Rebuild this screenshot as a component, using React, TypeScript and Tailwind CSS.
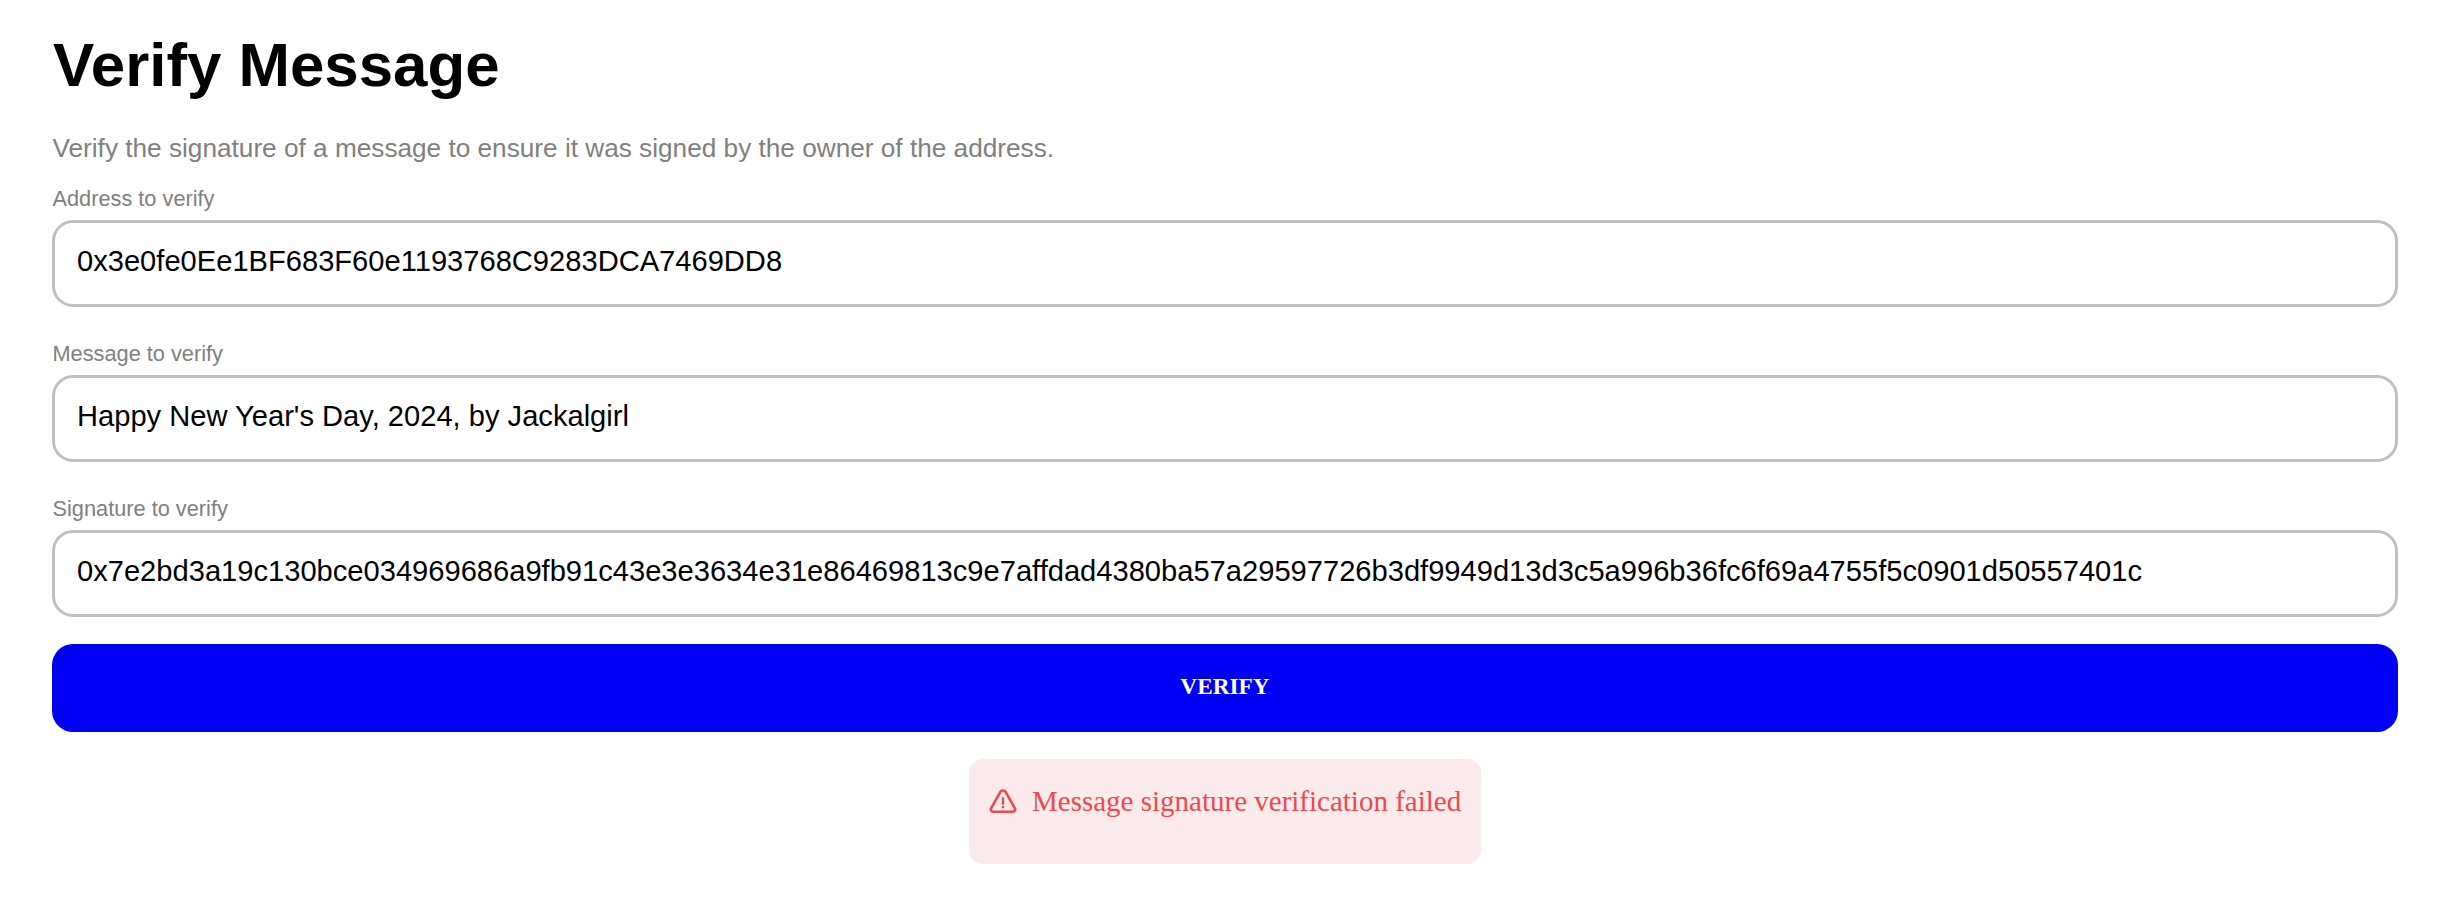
const fields = [
  { id: "address", label: "Address to verify", value: "0x3e0fe0Ee1BF683F60e1193768C9283DCA7469DD8" },
  { id: "message", label: "Message to verify", value: "Happy New Year's Day, 2024, by Jackalgirl" },
  {
    id: "signature",
    label: "Signature to verify",
    value:
      "0x7e2bd3a19c130bce034969686a9fb91c43e3e3634e31e86469813c9e7affdad4380ba57a29597726b3df9949d13d3c5a996b36fc6f69a4755f5c0901d50557401c",
  },
];

function Field({ id, label, value }: { id: string; label: string; value: string }) {
  return (
    <div className="flex flex-col">
      <label htmlFor={id} className="mb-[6px] pl-[0.5px] text-[21.75px] leading-[30px] text-[#808080]">
        {label}
      </label>
      <input
        id={id}
        defaultValue={value}
        className="h-[87px] w-full rounded-[21px] border-3 border-[#c0c0c0] bg-white px-[22px] pb-[5px] text-[29.12px] text-black outline-none"
      />
    </div>
  );
}

function WarningIcon() {
  return (
    <svg width="28" height="25" viewBox="0 0 28 25" fill="none" stroke="currentColor" strokeLinejoin="round" className="mt-[8px] shrink-0">
      <path
        strokeWidth="2.6"
        d="M11.2 3.2 L2.1 19.4 a2.3 2.3 0 0 0 2 3.4 H23.9 a2.3 2.3 0 0 0 2 -3.4 L16.8 3.2 a3.2 3.2 0 0 0 -5.6 0z"
      />
      <path strokeWidth="2.3" d="M14 8.2 V15.8 M14 17 V19.3" />
    </svg>
  );
}

export default function App() {
  return (
    <main className="flex min-h-[910px] flex-col bg-white pt-[28px] pr-[56px] pl-[52px] font-['Liberation_Sans',Arial,sans-serif]">
      <h1 className="pl-px text-[61.8px] leading-[74px] font-bold text-black">Verify Message</h1>
      <p className="mt-[26px] pl-[0.5px] text-[26.2px] leading-[40px] text-[#808080]">
        Verify the signature of a message to ensure it was signed by the owner of the address.
      </p>
      <form className="mt-[16px] flex flex-col" onSubmit={(e) => e.preventDefault()}>
        <div className="flex flex-col gap-[32px]">
          {fields.map((f) => (
            <Field key={f.id} {...f} />
          ))}
        </div>
        <button
          type="submit"
          className="mt-[27px] h-[88px] rounded-[21px] bg-[#0000f5] pb-[3px] font-['Liberation_Serif','Times_New_Roman',serif] text-[23.3px] font-bold text-white"
        >
          VERIFY
        </button>
      </form>
      <div
        role="alert"
        className="mt-[27px] flex h-[105px] w-[512px] items-start gap-[15px] self-center rounded-[14px] bg-[#fbeaeb] pt-[22px] pl-[20px] font-['Liberation_Serif','Times_New_Roman',serif] text-[29px] leading-[40px] whitespace-nowrap text-[#ea4a4c]"
      >
        <WarningIcon />
        <span>Message signature verification failed</span>
      </div>
    </main>
  );
}
